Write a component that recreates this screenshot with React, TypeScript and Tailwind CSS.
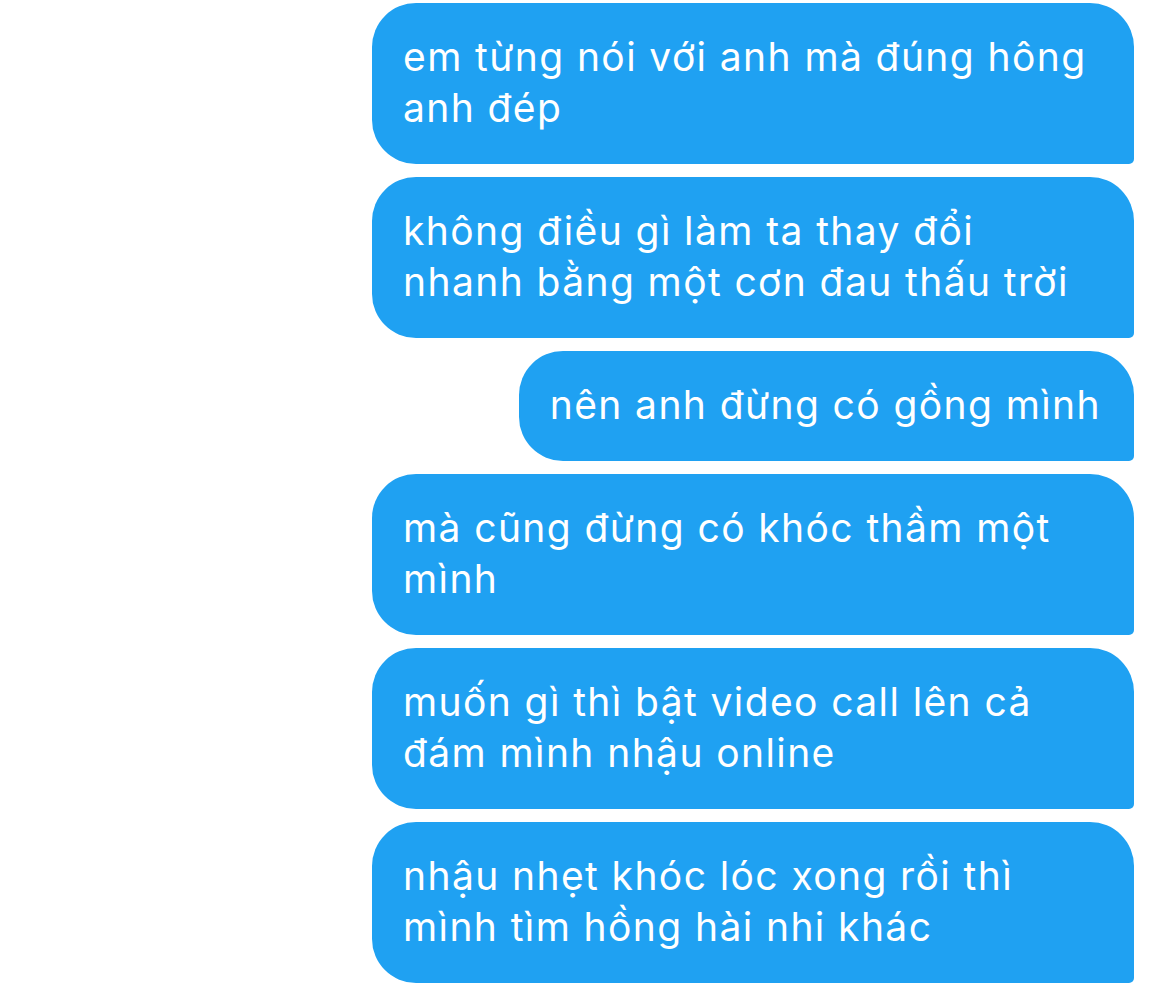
import React from 'react';

interface Bubble {
  lines: string[];
  wide: boolean;
}

const messages: Bubble[] = [
  { lines: ['em từng nói với anh mà đúng hông', 'anh đép'], wide: true },
  { lines: ['không điều gì làm ta thay đổi', 'nhanh bằng một cơn đau thấu trời'], wide: true },
  { lines: ['nên anh đừng có gồng mình'], wide: false },
  { lines: ['mà cũng đừng có khóc thầm một', 'mình'], wide: true },
  { lines: ['muốn gì thì bật video call lên cả', 'đám mình nhậu online'], wide: true },
  { lines: ['nhậu nhẹt khóc lóc xong rồi thì', 'mình tìm hồng hài nhi khác'], wide: true },
];

export default function App() {
  return (
    <div className="w-[1170px] h-[993px] bg-white overflow-hidden">
      <div className="flex flex-col items-end gap-[13px] pt-[3px] pr-[36px]">
        {messages.map((m, i) => (
          <div
            key={i}
            className={`${m.wide ? 'w-[762px]' : 'w-fit'} bg-[#1fa1f2] text-white rounded-[44px] rounded-br-[5px] pl-[31px] pr-[33px] pt-[28px] pb-[31px] font-['Inter','Noto_Sans',sans-serif] text-[39px] leading-[51px] tracking-[1.4px]`}
          >
            {m.lines.map((l, j) => (
              <span key={j} className="block whitespace-nowrap">
                {l}
              </span>
            ))}
          </div>
        ))}
      </div>
    </div>
  );
}
